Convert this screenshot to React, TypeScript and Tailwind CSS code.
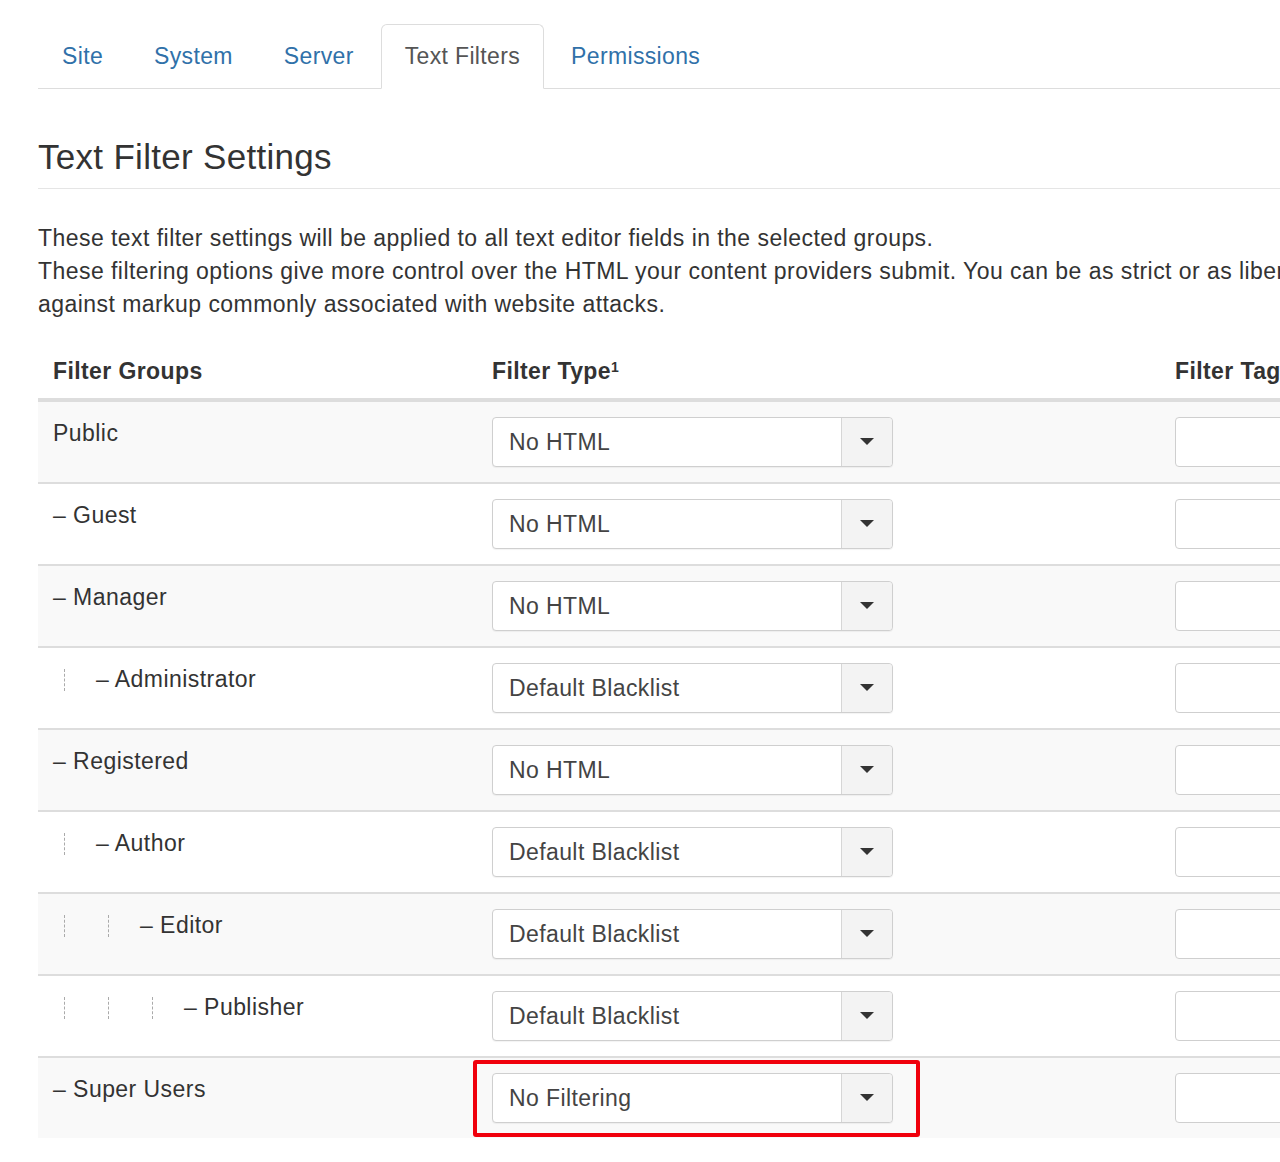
import { ReactNode } from 'react';

const tabs = ['Site', 'System', 'Server', 'Text Filters', 'Permissions'];

const rows = [
  { name: 'Public', depth: 0, dash: false, type: 'No HTML' },
  { name: 'Guest', depth: 0, dash: true, type: 'No HTML' },
  { name: 'Manager', depth: 0, dash: true, type: 'No HTML' },
  { name: 'Administrator', depth: 1, dash: true, type: 'Default Blacklist' },
  { name: 'Registered', depth: 0, dash: true, type: 'No HTML' },
  { name: 'Author', depth: 1, dash: true, type: 'Default Blacklist' },
  { name: 'Editor', depth: 2, dash: true, type: 'Default Blacklist' },
  { name: 'Publisher', depth: 3, dash: true, type: 'Default Blacklist' },
  { name: 'Super Users', depth: 0, dash: true, type: 'No Filtering', marked: true },
];

function Select({ value }: { value: string }) {
  return (
    <div className="flex h-[50px] w-[401px] rounded-[4px] border border-[#cfcfcf] bg-white shadow-[0_1px_1px_rgba(0,0,0,0.05)]">
      <div className="flex flex-1 items-center pl-[16px] text-[23px] tracking-[0.4px] text-[#444]">{value}</div>
      <div className="flex w-[51px] items-center justify-center rounded-r-[4px] border-l border-[#d6d6d6] bg-[#f3f3f3]">
        <svg width="14" height="8" viewBox="0 0 14 8">
          <polygon points="0,0 14,0 7,7" fill="#333" />
        </svg>
      </div>
    </div>
  );
}

function Guides({ depth }: { depth: number }) {
  const items: ReactNode[] = [];
  for (let i = 0; i < depth; i++) {
    items.push(
      <span
        key={i}
        className={
          'mt-[6px] inline-block h-[22px] shrink-0 border-l border-dashed border-[#aaa] ' +
          (i === depth - 1 ? 'mr-[31px]' : 'mr-[43px]')
        }
      />
    );
  }
  return <>{items}</>;
}

export default function App() {
  return (
    <div
      className="h-[1162px] w-[1280px] overflow-hidden bg-white text-[#333]"
      style={{ fontFamily: '"Liberation Sans", Arial, sans-serif' }}
    >
      <div className="ml-[38px] w-[1400px] pt-[24px]">
        {/* Tabs */}
        <div className="flex border-b border-[#ddd]">
          {tabs.map((t) => {
            const active = t === 'Text Filters';
            return (
              <div
                key={t}
                className={
                  active
                    ? 'relative -mb-px mr-[3px] flex h-[65px] items-center rounded-t-[6px] border border-[#ddd] border-b-white bg-white px-[23px] text-[23px] tracking-[0.35px] text-[#555]'
                    : 'mr-[3px] flex h-[64px] items-center border border-transparent px-[23px] text-[23px] tracking-[0.35px] text-[#3071a9]'
                }
              >
                {t}
              </div>
            );
          })}
        </div>

        {/* Heading */}
        <div className="mt-[46px] border-b border-[#e5e5e5] pb-[9px] text-[35px] leading-[44px] tracking-[0.3px] text-[#333]">
          Text Filter Settings
        </div>

        <p className="mt-[33px] whitespace-nowrap text-[23px] leading-[33px] tracking-[0.45px] text-[#333]">
          These text filter settings will be applied to all text editor fields in the selected groups.
          <br />
          These filtering options give more control over the HTML your content providers submit. You can be as strict or
          as liberal as you require to suit your site's needs.
          <br />
          against markup commonly associated with website attacks.
        </p>

        {/* Table */}
        <div className="mt-[16px]">
          <div className="grid grid-cols-[439px_683px_1fr] border-b-2 border-[#ddd] text-[23px] font-bold leading-[32px] tracking-[0.4px]">
            <div className="px-[15px] pb-[11px] pt-[18px]">Filter Groups</div>
            <div className="px-[15px] pb-[11px] pt-[18px]">
              Filter Type<sup className="text-[14px]">1</sup>
            </div>
            <div className="px-[15px] pb-[11px] pt-[18px]">Filter Tags</div>
          </div>
          {rows.map((r, i) => (
            <div
              key={r.name}
              className={
                'grid h-[82px] grid-cols-[439px_683px_1fr] border-t-2 border-[#ddd] first:border-t-0 ' +
                (i % 2 === 0 ? 'bg-[#f9f9f9]' : 'bg-white')
              }
            >
              <div className="flex items-start whitespace-pre px-[15px] pt-[15px] text-[23px] leading-[32px] tracking-[0.45px]">
                {r.depth > 0 && <span className="ml-[11px]" />}
                <Guides depth={r.depth} />
                {r.dash ? '– ' : ''}
                {r.name}
              </div>
              <div className="relative px-[15px] pt-[15px]">
                <Select value={r.type} />
                {r.marked && (
                  <div className="absolute left-[-4px] top-[2px] h-[77px] w-[447px] rounded-[3px] border-[4px] border-[#f0000c]" />
                )}
              </div>
              <div className="px-[15px] pt-[15px]">
                <div className="h-[50px] w-[200px] rounded-[4px] border border-[#cfcfcf] bg-white" />
              </div>
            </div>
          ))}
        </div>
      </div>
    </div>
  );
}
